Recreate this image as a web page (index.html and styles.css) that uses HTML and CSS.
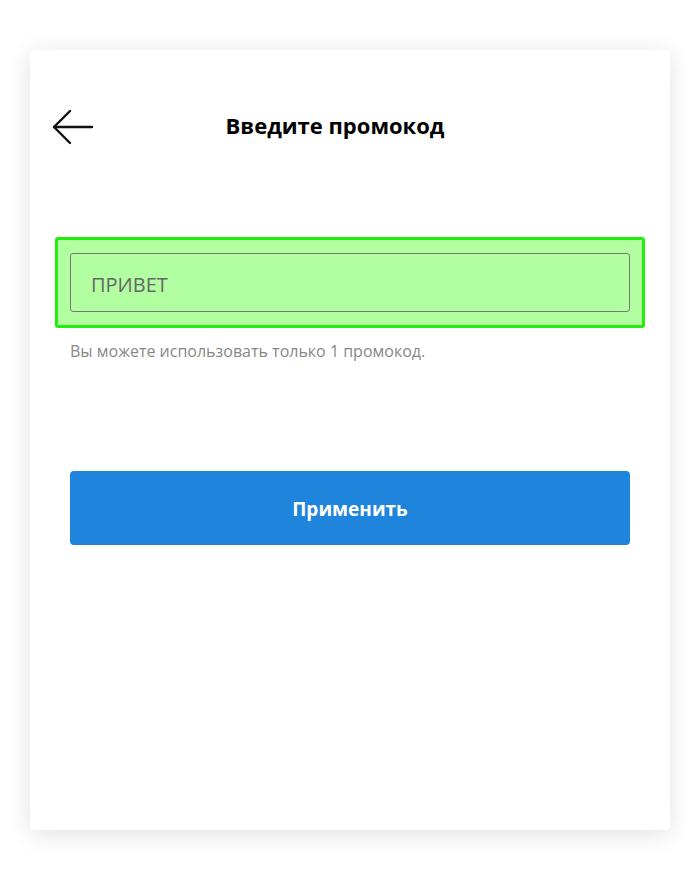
FILE: index.html
```html
<!DOCTYPE html>
<html lang="ru">
<head>
    <meta charset="UTF-8">
    <meta name="viewport" content="width=device-width, initial-scale=1.0">
    <title>Промокод</title>
    <link rel="stylesheet" href="styles.css">
</head>
<body>
    <div class="card">
        <div class="header">
            <button class="back" aria-label="Назад">
                <svg width="42" height="36" viewBox="0 0 42 36" fill="none" stroke="#111" stroke-width="2.4" stroke-linecap="round" stroke-linejoin="round">
                    <path d="M40 18H2"/>
                    <path d="M18 2L2 18l16 16"/>
                </svg>
            </button>
            <h2>Введите промокод</h2>
        </div>
        <div class="highlight">
            <input type="text" class="promo" value="ПРИВЕТ">
        </div>
        <p class="hint">Вы можете использовать только 1 промокод.</p>
        <button class="apply">Применить</button>
    </div>
</body>
</html>
```
FILE: styles.css
```css
body {
    margin: 0;
    padding: 50px 30px;
    background: #fff;
    font-family: "Open Sans", "Noto Sans", sans-serif;
}
.card {
    background: #fff;
    height: 780px;
    border-radius: 4px;
    box-shadow: 0 4px 24px rgba(0,0,0,0.12);
    padding: 59px 40px 0;
    box-sizing: border-box;
}
.header {
    display: flex;
    align-items: center;
    height: 36px;
}
.back {
    background: none;
    border: none;
    padding: 0;
    margin-left: -18px;
    width: 42px;
    height: 36px;
    cursor: pointer;
}
.header h2 {
    flex: 1;
    margin: 0 54px 4px 0;
    text-align: center;
    font-size: 22px;
    font-weight: 700;
    color: #000;
}
.highlight {
    margin: 92px -15px 0;
    padding: 13px 12px;
    border: 3px solid #22ee11;
    border-radius: 3px;
    background: #b2ffa2;
}
.promo {
    display: block;
    width: 100%;
    height: 59px;
    box-sizing: border-box;
    padding: 4px 20px 0;
    border: 1px solid #777;
    border-radius: 3px;
    background: transparent;
    font-family: inherit;
    font-size: 20px;
    color: #666;
}
.hint {
    margin: 12px 0 0;
    font-size: 16px;
    line-height: 22px;
    color: #888;
}
.apply {
    display: block;
    width: 100%;
    height: 74px;
    margin-top: 109px;
    padding-top: 2px;
    border: none;
    border-radius: 4px;
    background: #1f84dc;
    color: #fff;
    font-family: inherit;
    font-size: 19px;
    font-weight: 700;
    cursor: pointer;
}
```
